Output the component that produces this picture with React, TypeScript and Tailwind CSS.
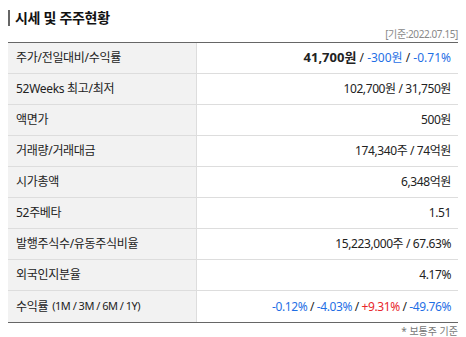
import React from "react";

type Seg = { t: string; c?: string; b?: boolean };
const rows: { h: React.ReactNode; v: Seg[] }[] = [
  {
    h: "주가/전일대비/수익률",
    v: [
      { t: "41,700원", b: true },
      { t: " / " },
      { t: "-300원", c: "blue" },
      { t: " / " },
      { t: "-0.71%", c: "blue" },
    ],
  },
  { h: "52Weeks 최고/최저", v: [{ t: "102,700원 / 31,750원" }] },
  { h: "액면가", v: [{ t: "500원" }] },
  { h: "거래량/거래대금", v: [{ t: "174,340주 / 74억원" }] },
  { h: "시가총액", v: [{ t: "6,348억원" }] },
  { h: "52주베타", v: [{ t: "1.51" }] },
  { h: "발행주식수/유동주식비율", v: [{ t: "15,223,000주 / 67.63%" }] },
  { h: "외국인지분율", v: [{ t: "4.17%" }] },
  {
    h: (
      <>
        <span>수익률</span>
        <span className="ml-[4px] text-[11px] tracking-[-0.5px]">(1M / 3M / 6M / 1Y)</span>
      </>
    ),
    v: [
      { t: "-0.12%", c: "blue" },
      { t: " / " },
      { t: "-4.03%", c: "blue" },
      { t: " / " },
      { t: "+9.31%", c: "red" },
      { t: " / " },
      { t: "-49.76%", c: "blue" },
    ],
  },
];

export default function App() {
  return (
    <div
      className="w-[466px] h-[337px] bg-white text-[#222] overflow-hidden"
      style={{ fontFamily: '"Noto Sans", "Noto Sans CJK KR", sans-serif' }}
    >
      <div className="pl-2 pr-2 pt-[10px]">
        <div className="flex items-center h-[16px]">
          <div className="w-[2px] h-[16px] bg-[#666]" />
          <div className="ml-[5px] text-[14px] font-bold leading-none text-[#111] tracking-[-0.3px]">
            시세 및 주주현황
          </div>
        </div>
        <div className="flex justify-end mt-[2px] text-[10px] leading-[12px] text-[#888] tracking-[-0.4px]">
          [기준:2022.07.15]
        </div>
        <div className="mt-[2px] border-t border-[#666] border-b w-[450px]">
          {rows.map((r, i) => (
            <div
              key={i}
              className={`flex h-[31px] ${i < rows.length - 1 ? "border-b border-[#ddd]" : ""}`}
            >
              <div className="w-[189px] bg-[#f2f2f2] border-r border-[#ddd] flex items-center pl-2 text-[12px] tracking-[-0.3px] text-[#222]">
                {r.h}
              </div>
              <div className="flex-1 flex items-center justify-end pr-[7px] text-[12px] tracking-[-0.4px] text-[#222]">
                {r.v.map((s, j) => (
                  <span
                    key={j}
                    className={`whitespace-pre ${s.b ? "font-bold text-[13px] tracking-[0px]" : ""} ${
                      s.c === "blue" ? "text-[#1f6fe5]" : s.c === "red" ? "text-[#e8262b]" : ""
                    } ${i === 0 && !s.b ? "tracking-[0px]" : ""}`}
                  >
                    {s.t}
                  </span>
                ))}
              </div>
            </div>
          ))}
        </div>
        <div className="flex justify-end mt-[1px] text-[10px] leading-[14px] text-[#777]">
          * 보통주 기준
        </div>
      </div>
    </div>
  );
}
